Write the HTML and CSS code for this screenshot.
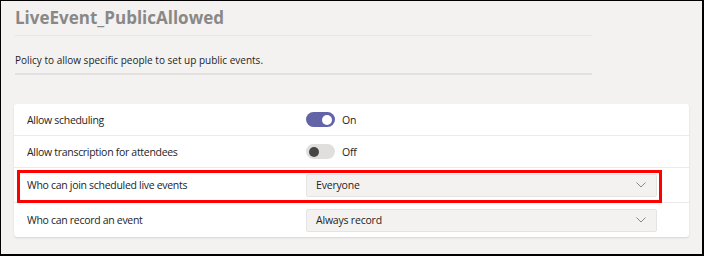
FILE: index.html
```html
<!DOCTYPE html>
<html lang="en">
<head>
    <meta charset="UTF-8">
    <meta name="viewport" content="width=device-width, initial-scale=1.0"/>
    <title>LiveEvent_PublicAllowed</title>
    <link rel="stylesheet" href="styles.css">
</head>
<body>
    <div class="frame">
    <!--policy header-->
    <div class="head">
        <h1 class="title">LiveEvent_PublicAllowed</h1>
        <hr class="rule">
        <p class="desc">Policy to allow specific people to set up public events.</p>
        <hr class="rule thick">
    </div>

    <!--settings card-->
    <div class="card">
        <div class="row">
            <span class="label">Allow scheduling</span>
            <div class="control">
                <span class="toggle on"><span class="knob"></span></span>
                <span class="state">On</span>
            </div>
        </div>
        <div class="row">
            <span class="label">Allow transcription for attendees</span>
            <div class="control">
                <span class="toggle"><span class="knob"></span></span>
                <span class="state">Off</span>
            </div>
        </div>
        <div class="row tall marked">
            <span class="label">Who can join scheduled live events</span>
            <div class="control">
                <div class="select">
                    <span>Everyone</span>
                    <svg class="chev" width="10" height="6" viewBox="0 0 10 6"><path d="M0.5 0.5 L5 5 L9.5 0.5" fill="none" stroke="#8a8886" stroke-width="1"/></svg>
                </div>
            </div>
            <span class="mark"></span>
        </div>
        <div class="row tall">
            <span class="label">Who can record an event</span>
            <div class="control">
                <div class="select">
                    <span>Always record</span>
                    <svg class="chev" width="10" height="6" viewBox="0 0 10 6"><path d="M0.5 0.5 L5 5 L9.5 0.5" fill="none" stroke="#8a8886" stroke-width="1"/></svg>
                </div>
            </div>
        </div>
    </div>
    </div>
</body>
</html>
```

FILE: styles.css
```css
* {
  font-family: "Open Sans", "Noto Sans", sans-serif;
  box-sizing: border-box;
}
body {
  margin: 0;
}
.frame {
  width: 704px;
  height: 256px;
  background: #f3f2f1;
  border-style: solid;
  border-color: #000;
  border-width: 1px 2px 2px 1px;
  padding: 5px 0 0 13px;
}
.head {
  width: 577px;
  margin-left: 1px;
}
.title {
  margin: 0;
  font-size: 17px;
  line-height: 24px;
  font-weight: 700;
  color: #8a8886;
}
.rule {
  margin: 5px 0 0 0;
  border: 0;
  height: 1px;
  background: #e8e6e4;
}
.rule.thick {
  margin-top: 5px;
  height: 2px;
  background: #e3e1df;
}
.desc {
  margin: 16px 0 0 0;
  font-size: 10px;
  line-height: 16px;
  color: #252424;
}
.card {
  margin-top: 29px;
  width: 675px;
  background: #fff;
  border-radius: 3px;
  box-shadow: 0 1px 2px rgba(0, 0, 0, 0.12);
}
.row {
  display: grid;
  grid-template-columns: 292px 351px;
  align-items: center;
  height: 32px;
  border-bottom: 1px solid #edebe9;
  position: relative;
}
.row.tall {
  height: 35px;
}
.row:last-child {
  border-bottom: 0;
  height: 34px;
}
.label {
  padding-left: 13px;
  font-size: 10.5px;
  letter-spacing: -0.3px;
  color: #252424;
}
.control {
  display: flex;
  align-items: center;
}
.toggle {
  width: 29px;
  height: 15px;
  border-radius: 8px;
  background: #e1dfdd;
  display: flex;
  align-items: center;
  padding: 0 3px;
}
.toggle .knob {
  width: 10px;
  height: 10px;
  border-radius: 50%;
  background: #484644;
}
.toggle.on {
  background: #6264a7;
  justify-content: flex-end;
}
.toggle.on .knob {
  background: #fff;
}
.state {
  margin-left: 7px;
  font-size: 10.5px;
  letter-spacing: -0.2px;
  color: #252424;
}
.select {
  width: 351px;
  height: 23px;
  background: #f3f2f1;
  border: 1px solid #e6e4e2;
  border-radius: 2px;
  display: flex;
  align-items: center;
  justify-content: space-between;
  padding: 0 10px 0 9px;
  font-size: 10.5px;
  letter-spacing: -0.2px;
  color: #252424;
}
.mark {
  position: absolute;
  left: 3px;
  right: 27px;
  top: 2px;
  bottom: -1px;
  border: 3px solid #f00;
}
```
